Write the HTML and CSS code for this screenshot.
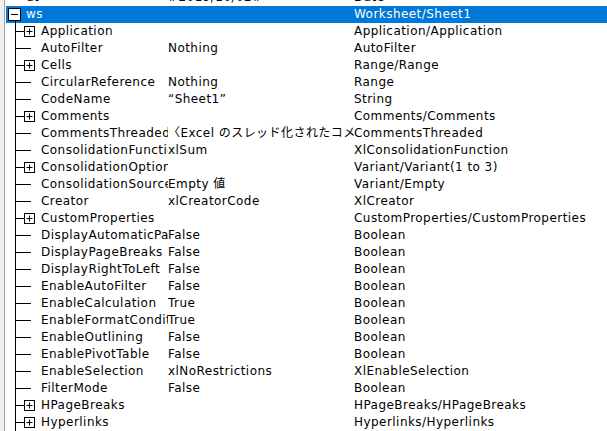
FILE: index.html
```html
<!DOCTYPE html>
<html lang="ja">
<head>
<meta charset="utf-8">
<title>ローカル ウィンドウ</title>
<link rel="stylesheet" href="styles.css">
</head>
<body>
<div class="pane">
  <div class="list">
    <div class="row"><div class="name"><span class="root-gap"></span>dt</div><div class="val">#2019/10/02#</div><div class="type">Date</div></div>
    <div class="row sel"><div class="name"><svg class="tr" viewBox="0 0 20 17"><path d="M9.5 14V17" stroke="#000"/><rect x="2.5" y="2.5" width="12" height="12" fill="#fff" stroke="#000"/><path d="M5 8.5H12" stroke="#000"/></svg>ws</div><div class="val"></div><div class="type">Worksheet/Sheet1</div></div>
    <div class="row"><div class="name"><svg class="tr2" viewBox="0 0 35 17"><path d="M9.5 0V17M9.5 8.5H18" stroke="#000"/><rect x="18.5" y="3.5" width="10" height="10" fill="#fff" stroke="#000"/><path d="M20.5 8.5H26.5M23.5 5.5V11.5" stroke="#000"/></svg>Application</div><div class="val"></div><div class="type">Application/Application</div></div>
    <div class="row"><div class="name"><svg class="tr2" viewBox="0 0 35 17"><path d="M9.5 0V17M9.5 8.5H25" stroke="#000"/></svg>AutoFilter</div><div class="val">Nothing</div><div class="type">AutoFilter</div></div>
    <div class="row"><div class="name"><svg class="tr2" viewBox="0 0 35 17"><path d="M9.5 0V17M9.5 8.5H18" stroke="#000"/><rect x="18.5" y="3.5" width="10" height="10" fill="#fff" stroke="#000"/><path d="M20.5 8.5H26.5M23.5 5.5V11.5" stroke="#000"/></svg>Cells</div><div class="val"></div><div class="type">Range/Range</div></div>
    <div class="row"><div class="name"><svg class="tr2" viewBox="0 0 35 17"><path d="M9.5 0V17M9.5 8.5H25" stroke="#000"/></svg>CircularReference</div><div class="val">Nothing</div><div class="type">Range</div></div>
    <div class="row"><div class="name"><svg class="tr2" viewBox="0 0 35 17"><path d="M9.5 0V17M9.5 8.5H25" stroke="#000"/></svg>CodeName</div><div class="val">“Sheet1”</div><div class="type">String</div></div>
    <div class="row"><div class="name"><svg class="tr2" viewBox="0 0 35 17"><path d="M9.5 0V17M9.5 8.5H18" stroke="#000"/><rect x="18.5" y="3.5" width="10" height="10" fill="#fff" stroke="#000"/><path d="M20.5 8.5H26.5M23.5 5.5V11.5" stroke="#000"/></svg>Comments</div><div class="val"></div><div class="type">Comments/Comments</div></div>
    <div class="row"><div class="name"><svg class="tr2" viewBox="0 0 35 17"><path d="M9.5 0V17M9.5 8.5H25" stroke="#000"/></svg>CommentsThreaded</div><div class="val">〈Excel のスレッド化されたコメント〉</div><div class="type">CommentsThreaded</div></div>
    <div class="row"><div class="name"><svg class="tr2" viewBox="0 0 35 17"><path d="M9.5 0V17M9.5 8.5H25" stroke="#000"/></svg>ConsolidationFunction</div><div class="val">xlSum</div><div class="type">XlConsolidationFunction</div></div>
    <div class="row"><div class="name"><svg class="tr2" viewBox="0 0 35 17"><path d="M9.5 0V17M9.5 8.5H18" stroke="#000"/><rect x="18.5" y="3.5" width="10" height="10" fill="#fff" stroke="#000"/><path d="M20.5 8.5H26.5M23.5 5.5V11.5" stroke="#000"/></svg>ConsolidationOptions</div><div class="val"></div><div class="type">Variant/Variant(1 to 3)</div></div>
    <div class="row"><div class="name"><svg class="tr2" viewBox="0 0 35 17"><path d="M9.5 0V17M9.5 8.5H25" stroke="#000"/></svg>ConsolidationSources</div><div class="val">Empty 値</div><div class="type">Variant/Empty</div></div>
    <div class="row"><div class="name"><svg class="tr2" viewBox="0 0 35 17"><path d="M9.5 0V17M9.5 8.5H25" stroke="#000"/></svg>Creator</div><div class="val">xlCreatorCode</div><div class="type">XlCreator</div></div>
    <div class="row"><div class="name"><svg class="tr2" viewBox="0 0 35 17"><path d="M9.5 0V17M9.5 8.5H18" stroke="#000"/><rect x="18.5" y="3.5" width="10" height="10" fill="#fff" stroke="#000"/><path d="M20.5 8.5H26.5M23.5 5.5V11.5" stroke="#000"/></svg>CustomProperties</div><div class="val"></div><div class="type">CustomProperties/CustomProperties</div></div>
    <div class="row"><div class="name"><svg class="tr2" viewBox="0 0 35 17"><path d="M9.5 0V17M9.5 8.5H25" stroke="#000"/></svg>DisplayAutomaticPageBreaks</div><div class="val">False</div><div class="type">Boolean</div></div>
    <div class="row"><div class="name"><svg class="tr2" viewBox="0 0 35 17"><path d="M9.5 0V17M9.5 8.5H25" stroke="#000"/></svg>DisplayPageBreaks</div><div class="val">False</div><div class="type">Boolean</div></div>
    <div class="row"><div class="name"><svg class="tr2" viewBox="0 0 35 17"><path d="M9.5 0V17M9.5 8.5H25" stroke="#000"/></svg>DisplayRightToLeft</div><div class="val">False</div><div class="type">Boolean</div></div>
    <div class="row"><div class="name"><svg class="tr2" viewBox="0 0 35 17"><path d="M9.5 0V17M9.5 8.5H25" stroke="#000"/></svg>EnableAutoFilter</div><div class="val">False</div><div class="type">Boolean</div></div>
    <div class="row"><div class="name"><svg class="tr2" viewBox="0 0 35 17"><path d="M9.5 0V17M9.5 8.5H25" stroke="#000"/></svg>EnableCalculation</div><div class="val">True</div><div class="type">Boolean</div></div>
    <div class="row"><div class="name"><svg class="tr2" viewBox="0 0 35 17"><path d="M9.5 0V17M9.5 8.5H25" stroke="#000"/></svg>EnableFormatConditionsCalculation</div><div class="val">True</div><div class="type">Boolean</div></div>
    <div class="row"><div class="name"><svg class="tr2" viewBox="0 0 35 17"><path d="M9.5 0V17M9.5 8.5H25" stroke="#000"/></svg>EnableOutlining</div><div class="val">False</div><div class="type">Boolean</div></div>
    <div class="row"><div class="name"><svg class="tr2" viewBox="0 0 35 17"><path d="M9.5 0V17M9.5 8.5H25" stroke="#000"/></svg>EnablePivotTable</div><div class="val">False</div><div class="type">Boolean</div></div>
    <div class="row"><div class="name"><svg class="tr2" viewBox="0 0 35 17"><path d="M9.5 0V17M9.5 8.5H25" stroke="#000"/></svg>EnableSelection</div><div class="val">xlNoRestrictions</div><div class="type">XlEnableSelection</div></div>
    <div class="row"><div class="name"><svg class="tr2" viewBox="0 0 35 17"><path d="M9.5 0V17M9.5 8.5H25" stroke="#000"/></svg>FilterMode</div><div class="val">False</div><div class="type">Boolean</div></div>
    <div class="row"><div class="name"><svg class="tr2" viewBox="0 0 35 17"><path d="M9.5 0V17M9.5 8.5H18" stroke="#000"/><rect x="18.5" y="3.5" width="10" height="10" fill="#fff" stroke="#000"/><path d="M20.5 8.5H26.5M23.5 5.5V11.5" stroke="#000"/></svg>HPageBreaks</div><div class="val"></div><div class="type">HPageBreaks/HPageBreaks</div></div>
    <div class="row"><div class="name"><svg class="tr2" viewBox="0 0 35 17"><path d="M9.5 0V17M9.5 8.5H18" stroke="#000"/><rect x="18.5" y="3.5" width="10" height="10" fill="#fff" stroke="#000"/><path d="M20.5 8.5H26.5M23.5 5.5V11.5" stroke="#000"/></svg>Hyperlinks</div><div class="val"></div><div class="type">Hyperlinks/Hyperlinks</div></div>
    <div class="row"><div class="name"><svg class="tr2" viewBox="0 0 35 17"><path d="M9.5 0V17M9.5 8.5H25" stroke="#000"/></svg>Index</div><div class="val">1</div><div class="type">Long</div></div>
  </div>
</div>
</body>
</html>
```

FILE: styles.css
```css
html, body {
  margin: 0;
  padding: 0;
  width: 607px;
  height: 431px;
  overflow: hidden;
  background: #f0f0f0;
}

.pane {
  margin-left: 4px;
  border-left: 1px solid #a0a0a0;
  padding-left: 1px;
  background: #fff;
  height: 431px;
  overflow: hidden;
  font-family: "DejaVu Sans", "Noto Sans CJK JP", sans-serif;
  font-size: 12px;
  letter-spacing: 0.45px;
  color: #000;
}

.list {
  margin-top: -11px;
}

.row {
  display: flex;
  height: 17px;
  line-height: 17px;
  white-space: nowrap;
}

.row.sel {
  background: #0078d7;
  color: #fff;
}

.name {
  width: 162px;
  flex: none;
  overflow: hidden;
  display: flex;
  align-items: center;
}

.val {
  width: 186px;
  flex: none;
  overflow: hidden;
}

.type {
  flex: 1;
  overflow: hidden;
}

.tr {
  width: 20px;
  height: 17px;
  flex: none;
}

.tr2 {
  width: 35px;
  height: 17px;
  flex: none;
}

.root-gap {
  width: 20px;
  flex: none;
}
```
